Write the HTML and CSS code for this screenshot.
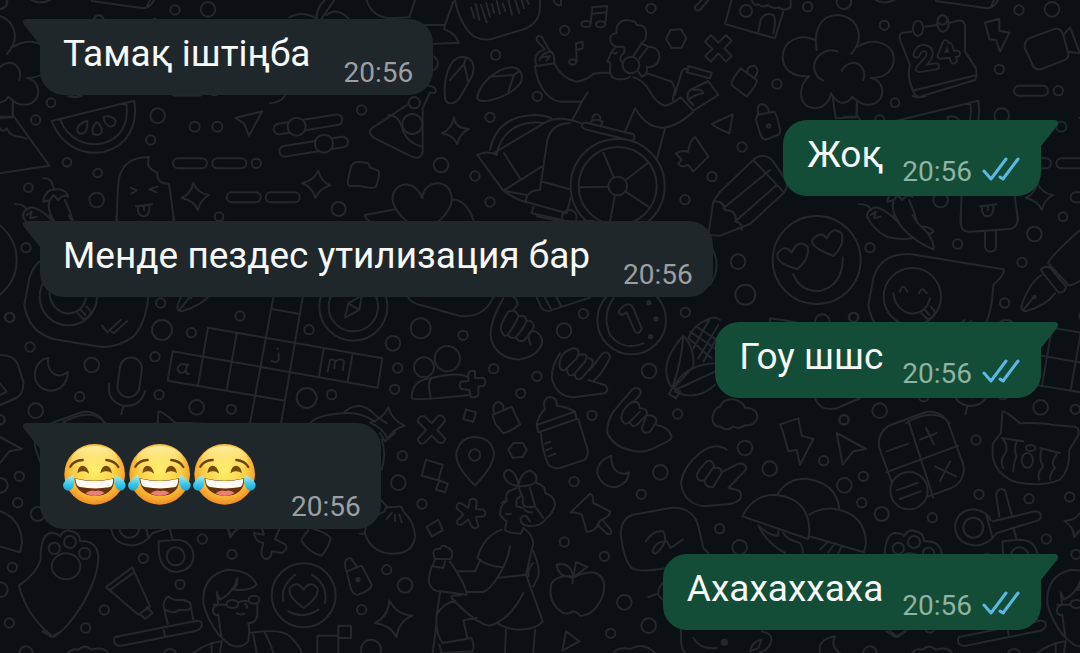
FILE: index.html
```html
<!DOCTYPE html>
<html lang="kk">
<head>
<meta charset="utf-8">
<meta name="viewport" content="width=device-width, initial-scale=1">
<title>Chat</title>
<link rel="stylesheet" href="styles.css">
</head>
<body>
<svg class="wallpaper" viewBox="0 0 3240 1959" preserveAspectRatio="xMinYMin slice" aria-hidden="true">
<g id="doodles">
<g>
<circle cx="525" cy="30" r="14"/><circle cx="624" cy="28" r="22"/><circle cx="295" cy="60" r="14"/><circle cx="153" cy="308" r="13"/><circle cx="107" cy="360" r="14"/><circle cx="473" cy="347" r="22"/><circle cx="584" cy="380" r="15"/><circle cx="652" cy="380" r="15"/><circle cx="452" cy="420" r="14"/><circle cx="201" cy="487" r="13"/><circle cx="293" cy="519" r="13"/><circle cx="290" cy="600" r="22"/><circle cx="85" cy="563" r="13"/><circle cx="769" cy="490" r="14"/><circle cx="1016" cy="627" r="21"/><circle cx="657" cy="650" r="13"/>
<path d="M155 363L403 302C415 380 380 440 310 456C240 468 180 430 155 363ZM180 358C205 420 260 440 310 430C360 415 388 375 379 310M262 362Q232 370 231 392Q240 408 255 396Q264 384 262 362ZM290 366Q272 385 280 402Q296 410 306 396Q306 378 290 366ZM311 350Q310 370 330 380Q346 380 347 362Q336 345 311 350Z"/>
<path d="M706 354L787 334L747 407L732 370Z"/>
<rect x="820" y="357" width="208" height="32" rx="16" transform="rotate(-9 924 373)"/><circle class="solid" cx="890" cy="380" r="27"/>
<rect x="837" y="424" width="208" height="32" rx="16" transform="rotate(-9 941 440)"/><circle class="solid" cx="972" cy="431" r="27"/>
<rect x="519" y="475" width="102" height="30" rx="15"/><rect x="637" y="475" width="102" height="30" rx="15"/><rect x="680" y="577" width="102" height="30" rx="15"/><rect x="797" y="577" width="102" height="30" rx="15"/>
<path d="M580 549Q592 580 627 585Q600 600 594 630Q582 602 545 594Q572 582 580 549ZM955 512Q962 545 991 556Q960 565 946 594Q938 563 907 549Q940 543 955 512Z"/>
<path d="M350 668C352 600 352 560 358 530C370 490 395 472 447 471Q435 505 472 517Q470 552 507 551L522 660M392 563L410 571L394 581M472 560L448 568L470 577M407 619Q430 617 457 613M414 619V632Q418 650 434 649Q450 645 448 615M432 618V630"/>
<path d="M38 315V345L148 497L0 520M0 385Q10 400 20 385Q30 410 60 410L80 416M0 350H35"/>
<path d="M130 535Q155 530 162 570M130 605Q135 565 175 568Q200 570 205 590Q195 585 185 590L175 600L160 585L150 600ZM148 605Q140 630 165 668M195 600Q210 630 220 668M45 612Q75 612 80 630M70 655Q65 630 95 622Q120 625 155 660M80 645L95 635L90 655L110 650"/>
<path d="M0 28Q25 20 20 0M95 0Q120 15 150 0M275 3L430 25Q450 25 462 0M440 22L450 0M868 52Q905 30 950 55Q950 20 975 0M965 55L1003 0M980 45Q1010 20 1045 55M810 310Q840 308 855 288M205 288Q225 295 245 288"/>
</g>
<g transform="translate(1080 0)">
<circle cx="614" cy="91" r="14"/><circle cx="873" cy="25" r="14"/><circle cx="407" cy="165" r="14"/><circle cx="532" cy="289" r="14"/><circle cx="390" cy="352" r="14"/><circle cx="243" cy="495" r="22"/><circle cx="345" cy="528" r="14"/><circle cx="390" cy="606" r="14"/><circle cx="1056" cy="530" r="14"/><circle cx="975" cy="599" r="14"/><circle cx="5" cy="330" r="14"/><circle cx="212" cy="190" r="22"/>
<path d="M285 0Q300 75 340 108Q370 125 400 115L490 88Q540 70 540 20V0M333 22L343 54M347 12L358 60M363 15L380 67M378 8L390 50M396 12L402 38M410 3L420 42M428 10L436 33M445 0L456 45M466 0L478 40M485 0L492 25M500 0L506 12"/>
<path d="M20 0Q35 50 90 55L148 52L165 0M280 5L255 75L190 75M255 75L252 88Q275 95 285 108L297 128L215 132M580 0Q590 20 603 15V0M1025 0L1005 20Q1003 35 1020 30L1045 0"/>
<path d="M692 70L697 22L742 18L736 70M695 42L740 36M650 185L648 130L668 125V145L650 150"/><ellipse cx="678" cy="72" rx="14" ry="9"/><ellipse cx="722" cy="73" rx="14" ry="9"/><ellipse cx="638" cy="186" rx="11" ry="8"/>
<path d="M918 117L932 90L963 88L979 114L965 143L935 144ZM1035 125L1053 105L1075 128L1098 105L1115 122L1093 145L1115 168L1098 185L1075 160L1053 185L1035 168L1057 147Z"/>
<path d="M255 290C250 240 265 175 305 170C345 170 348 210 330 240C310 270 300 310 270 310Q255 308 255 290ZM270 240L312 192L325 245M312 192L318 175M352 290C360 250 410 205 455 202C490 205 495 240 470 262C440 290 390 305 365 303Q350 300 352 290ZM388 230L462 225L445 275M462 225L475 215"/>
<path d="M195 255L220 260Q235 275 220 280L210 277L188 325V455Q185 478 160 472L45 415Q20 400 35 385L145 312M85 345Q115 345 124 378Q138 430 188 440"/><circle cx="163" cy="308" r="17"/><circle cx="157" cy="372" r="30"/>
<path d="M282 352Q285 385 327 387Q298 400 292 433Q280 405 245 400Q275 388 282 352ZM0 485L25 490L30 502L55 512Q62 520 48 560Q45 568 0 558H-30Q-40 555 -36 540L-28 505Q-26 485 0 485Z"/>
<path d="M187 595C190 560 215 548 238 550C275 555 285 600 265 630Q245 660 225 672H150C110 640 90 610 100 580C115 545 165 540 187 595ZM105 628L15 645Q12 655 40 670M275 598Q320 600 340 660"/>
<path d="M555 148L530 122Q528 102 545 110L568 150Q585 160 583 190L530 198Q515 160 555 148M538 180Q550 155 575 155M548 172L570 168L560 182M525 198C530 250 560 300 600 305H665L683 278M583 190Q605 235 650 245Q680 240 700 222Q730 215 750 220"/>
<path d="M768 140Q745 130 752 108Q760 98 770 100Q765 65 800 60Q830 62 830 75Q865 75 857 110Q860 120 845 128M768 140H790Q800 155 785 165Q775 180 790 188M768 140L755 155Q765 165 770 158M755 155L742 185Q755 185 750 205Q748 235 770 237Q800 240 810 230M820 168L845 130L865 140L838 175M865 140Q900 140 898 175Q890 205 860 200Q865 225 845 230L835 215"/><circle cx="813" cy="195" r="25"/>
<path d="M820 232Q850 240 870 275Q890 310 915 317Q930 315 962 292M862 220L935 245L945 265L938 300M945 285L965 215Q975 200 985 210M985 198L1055 218L1050 235L980 217ZM962 292L1000 332L1075 285L1045 243L1000 265Q975 275 985 300L1000 315M985 300Q1000 285 1030 280Q1025 265 1000 270M665 305Q655 330 635 362M825 325L795 395M825 325Q860 385 910 383Q950 380 1000 335M915 385L890 480"/>
<path d="M665 380Q665 367 680 368L820 403Q828 412 818 423L675 388ZM690 370Q700 352 728 365L722 378M697 355Q700 342 712 343Q724 348 720 360"/>
<circle cx="773" cy="558" r="141"/><circle cx="773" cy="558" r="117"/><circle cx="773" cy="558" r="28"/>
<path d="M730 458L760 530M862 490L797 540M658 562L745 560M865 620L797 575M750 665L765 586M390 450Q410 350 520 345Q560 345 575 357M410 465Q420 400 480 375Q520 362 550 370M400 460L560 365Q600 345 665 370M410 465Q380 450 352 465L430 572L545 500M432 460L480 535M430 572Q470 600 500 607M430 572L500 585M630 370Q575 370 562 420L540 568M548 545L630 568M540 570Q500 570 497 605L620 640L633 590M520 620L515 640L610 660"/><circle cx="628" cy="652" r="22"/>
<path d="M948 460Q965 450 985 455Q985 430 1005 410L1025 440L1045 470L1000 515L985 495Q960 505 955 490L965 480ZM530 648Q600 670 700 662M820 690L860 670"/>
</g>
<g transform="translate(2160 0)">
<circle cx="78" cy="33" r="18"/><circle cx="263" cy="20" r="14"/><circle cx="372" cy="5" r="22"/><circle cx="493" cy="76" r="14"/><circle cx="838" cy="208" r="14"/><circle cx="1015" cy="272" r="14"/><circle cx="171" cy="252" r="14"/><circle cx="66" cy="441" r="14"/><circle cx="146" cy="378" r="5"/>
<rect x="882" y="257" width="102" height="30" rx="15"/>
<path d="M290 150C280 95 300 45 352 45C410 47 440 110 393 162M286 120C240 100 190 120 188 170C188 210 220 232 268 228C230 260 235 322 285 325C315 322 330 300 333 280C345 300 360 312 370 308Q388 305 397 290Q430 325 465 310C500 290 490 240 453 234C500 235 525 205 521 170C515 130 460 110 413 140M353 155C320 142 285 165 282 200Q284 232 310 242M365 213C375 190 405 180 422 198Q438 215 430 240M338 290L347 355L410 352L411 300"/>
<path d="M-25 372L38 343L28 400L-5 385ZM0 575L105 475Q135 455 160 485L200 545Q205 560 190 580L90 672L0 707L-35 705L-20 605ZM100 480L190 575M10 625L150 510M45 665L170 555M-20 605Q10 600 15 630Q50 630 48 665Q70 670 65 690"/>
<path d="M35 0L15 72L165 115L190 35M115 95L122 60Q135 35 160 45Q170 60 160 100M95 0Q100 20 115 12Q125 25 145 15Q160 30 175 22Q195 35 212 22V0"/>
<path d="M62 205L110 240Q115 250 80 290L35 255Q30 245 62 205ZM80 215Q85 195 105 198Q120 210 105 232M112 345L160 335Q170 335 180 390Q182 405 165 408L140 418Q125 420 120 400L108 360ZM115 345Q108 315 125 312Q145 315 147 338"/>
<path d="M575 95L548 98Q535 103 540 120L570 195Q560 230 578 270Q585 292 600 290L765 240Q772 230 768 205L735 155V75Q730 60 715 62L690 68M615 80L650 75M578 272L768 226"/><ellipse cx="594" cy="85" rx="15" ry="23"/><ellipse cx="669" cy="70" rx="17" ry="25"/>
<g id="date"><path class="digit-edge" d="M590 163Q596 144 613 144Q638 150 624 176L597 207L648 199M677 130L662 167L711 161M688 138L701 181"/><path class="digit-core" d="M590 163Q596 144 613 144Q638 150 624 176L597 207L648 199M677 130L662 167L711 161M688 138L701 181"/></g>
<path d="M795 68L838 56V92L868 98L840 155L828 120L808 118ZM915 145Q910 120 935 112L1000 88Q1020 82 1028 100L1045 160Q1048 175 1030 182L965 207Q945 212 938 195ZM1030 105L1050 82L1080 160L1045 155"/>
</g>
<g transform="translate(0 645)">
<circle cx="78" cy="98" r="14"/><circle cx="28" cy="307" r="14"/><circle cx="90" cy="396" r="14"/><circle cx="482" cy="264" r="14"/><circle cx="486" cy="345" r="30"/><circle cx="574" cy="353" r="14"/><circle cx="720" cy="303" r="14"/><circle cx="927" cy="344" r="14"/><circle cx="275" cy="450" r="22"/><circle cx="465" cy="425" r="14"/><circle cx="239" cy="545" r="14"/><circle cx="107" cy="587" r="22"/><circle cx="477" cy="539" r="14"/><circle cx="590" cy="577" r="22"/><circle cx="694" cy="583" r="14"/><circle cx="920" cy="549" r="30"/><circle cx="995" cy="539" r="14"/><circle cx="0" cy="615" r="14"/>
<path d="M445 248Q435 330 400 365Q350 400 300 395L160 372Q85 350 73 270L88 190Q108 115 198 117L478 163Q486 175 448 210ZM148 235C153 280 188 300 213 295Q248 290 258 250M168 230Q176 200 190 230M225 235Q233 210 248 235M233 295L250 312Q268 310 273 290L260 275M243 285L256 300M306 332L322 352L362 315M335 350L341 355L382 318"/><circle cx="205" cy="245" r="86"/>
<path d="M145 428C110 435 100 470 107 495C120 530 160 535 185 515Q205 495 203 470Q180 490 160 475Q140 460 145 428ZM0 420Q40 420 52 445L70 500Q72 540 45 550L0 570M0 505L20 530L0 540M327 507Q322 560 370 572Q420 578 436 527M370 574L364 598"/>
<rect x="356" y="427" width="66" height="120" rx="33" transform="rotate(8 389 487)"/>
<path d="M624 338L1147 430L1133 518L518 409L503 497L855 557M624 338L594 512M710 355L680 525M820 248L750 625M908 248L843 625M818 283L900 297M971 400L957 485M1058 415L1043 500M560 450Q540 440 533 460Q535 480 555 470L563 448M560 470Q558 478 567 477M836 415V435Q832 445 815 438M833 400V402M983 470L990 435Q1003 430 1005 440L1003 460M1005 440Q1025 425 1033 440L1028 465"/>
<circle cx="1060" cy="275" r="102"/><circle cx="1060" cy="275" r="74"/><path d="M1035 308L1045 265L1085 242L1078 285ZM1045 265L1078 285"/>
<path d="M185 625Q240 590 285 602Q305 610 318 625M930 625Q950 600 1030 595Q1045 575 1080 572Q1110 580 1125 600L1160 625M1030 595Q1080 590 1125 620"/>
</g>
<g transform="translate(1080 645)">
<circle cx="182" cy="340" r="30"/><circle cx="99" cy="385" r="22"/><circle cx="309" cy="361" r="14"/><circle cx="612" cy="347" r="22"/><circle cx="670" cy="296" r="14"/><circle cx="976" cy="292" r="14"/><circle cx="401" cy="461" r="14"/><circle cx="113" cy="459" r="14"/><circle cx="104" cy="523" r="14"/><circle cx="531" cy="484" r="14"/><circle cx="482" cy="535" r="14"/><circle cx="867" cy="468" r="22"/><circle cx="696" cy="601" r="14"/><circle cx="953" cy="597" r="14"/>
<path d="M145 248Q155 265 190 272L300 303Q370 310 400 248M530 248L545 280Q555 290 570 287L690 248M555 248L572 280M590 248L605 275M1050 90Q1090 150 1050 210"/>
<circle cx="815" cy="315" r="103"/><path d="M850 385Q790 410 750 360Q725 300 760 250M775 292Q780 280 795 270Q812 262 820 280L845 340Q840 360 825 350L800 292L785 300Z"/><circle class="dot" cx="867" cy="263" r="5"/><circle class="dot" cx="888" cy="312" r="5"/><circle class="dot" cx="872" cy="365" r="5"/>
<path d="M430 250Q390 320 392 360C395 410 440 435 480 433C530 425 555 390 543 365Q525 340 510 352Q500 360 512 390M450 240Q475 250 472 270L460 285M425 350Q415 335 445 290Q470 280 475 305Q460 340 440 362Q430 365 425 350M475 305Q495 295 500 318Q485 350 465 368Q450 372 445 360M500 318Q520 315 522 335Q510 360 490 378Q475 380 468 368"/>
<path d="M600 415Q575 450 575 490Q590 545 640 547L735 535Q750 520 735 510L685 495M700 497Q720 485 750 430Q748 405 728 415L690 465M598 450Q600 410 640 400Q665 400 650 430L615 465Q600 470 598 450M655 420Q690 410 675 440L640 480Q620 485 622 465M685 430Q705 430 695 455L665 490Q645 498 645 480"/>
<path d="M742 654Q740 620 760 590L815 525Q835 510 843 530Q840 550 810 565Q780 590 785 615Q795 635 810 620L840 590M820 562Q838 555 840 580Q865 580 860 600Q890 600 890 620L870 650Q850 660 845 640L860 600M810 620Q815 640 830 630L860 600M890 630Q925 635 935 665Q935 675 900 690Q850 720 810 705Q760 695 742 654"/>
<circle cx="192" cy="457" r="30"/><circle cx="262" cy="431" r="38"/><path d="M155 550Q155 495 210 490Q290 470 320 485M155 550Q165 558 330 540M212 545Q200 500 215 490M325 475Q330 465 345 468V490L370 488Q382 500 372 512L355 515V540Q345 552 332 545L328 525L305 522Q295 512 302 500L325 498Z"/>
<path d="M970 362Q910 430 920 480Q925 510 940 520L1000 455Q1005 400 970 362ZM970 362Q965 440 938 515M940 520Q970 450 1065 445M945 530Q1010 560 1065 510M945 525L1065 470M938 517L960 530L948 550L927 537ZM985 370Q1000 330 1040 315Q1060 300 1080 315M990 350L1065 400M1010 335L1070 375M1000 400L1050 310M1015 430L1075 330M1030 440L1070 370M985 370L1055 430"/>
<path d="M85 577Q95 615 134 632Q100 640 83 672Q70 640 30 623Q70 612 85 577ZM172 618Q180 598 195 605L215 625L235 602Q255 600 255 618L232 645L256 672Q250 688 235 682L215 662L192 685Q178 690 173 672L198 645ZM318 583L348 592L340 620L310 612ZM398 600L455 575L480 628Q450 650 430 655L405 625ZM402 595Q395 565 415 560Q432 565 430 582"/>
<path d="M530 630L645 590M530 630Q535 600 555 583Q545 550 570 546Q592 548 590 572Q620 575 645 590L650 612L535 652L530 630M543 652Q545 704 565 749Q580 762 600 759L675 734Q685 724 683 704L655 612M555 686L572 680M558 706L575 699M565 724L587 716"/>
</g>
<g transform="translate(2160 645)">
<circle cx="54" cy="140" r="22"/><circle cx="76" cy="239" r="30"/><circle cx="713" cy="87" r="14"/><circle cx="943" cy="57" r="22"/><circle cx="906" cy="142" r="14"/><circle cx="402" cy="307" r="14"/><circle cx="307" cy="320" r="22"/><circle cx="372" cy="614" r="14"/><circle cx="290" cy="135" r="132"/>
<path d="M232 162Q165 145 173 115Q195 85 215 113Q235 70 263 95Q270 130 232 162ZM340 123Q270 95 277 75Q300 45 320 70Q340 30 365 55Q375 90 340 123ZM220 178Q240 230 300 228Q370 210 368 127"/>
<path d="M722 0V25Q725 52 750 50L870 42Q895 38 893 5M795 50V95Q797 110 812 110Q828 108 828 95V47M440 0Q455 40 500 65Q540 76 575 70M520 0Q560 70 640 103Q645 85 620 50Q585 20 578 0M605 35Q635 35 640 50Q630 62 620 50"/>
<path d="M1100 185Q1055 215 1045 210L985 145Q985 130 1080 45M962 165Q975 150 990 158L1038 215Q1035 235 1015 232ZM965 180Q930 200 905 270Q900 290 920 288Q980 270 1005 235M910 285L940 248"/><circle cx="943" cy="246" r="4"/>
<path d="M0 575Q10 550 40 553Q70 560 75 578Q115 580 112 610Q100 635 75 630Q60 645 40 635Q20 650 0 635Q-25 635 -22 605Q-15 575 0 575ZM285 550Q300 590 350 580L420 550M150 320V310L230 322M843 654L847 590Q855 585 900 625Q960 622 1000 630L1065 635Q1080 640 1075 660L1048 704Q1050 764 1020 794Q960 819 880 799Q805 764 820 684L843 654"/>
</g>
<g transform="translate(0 1299)">
<circle cx="58" cy="130" r="14"/><circle cx="1" cy="157" r="22"/><circle cx="53" cy="209" r="14"/><circle cx="113" cy="243" r="21"/><circle cx="37" cy="403" r="14"/><circle cx="1" cy="470" r="22"/><circle cx="28" cy="570" r="14"/><circle cx="257" cy="585" r="14"/><circle cx="313" cy="531" r="14"/><circle cx="540" cy="454" r="14"/><circle cx="430" cy="376" r="14"/><circle cx="607" cy="318" r="14"/><circle cx="696" cy="364" r="14"/><circle cx="78" cy="660" r="20"/><circle cx="510" cy="668" r="20"/><circle class="dot" cx="1074" cy="440" r="5"/>
<path d="M57 458Q110 420 122 380Q120 310 150 300Q175 300 180 310Q195 285 215 295Q240 300 240 325Q290 320 295 370Q295 430 250 510Q200 590 160 612Q80 550 57 458Z"/><circle cx="163" cy="346" r="17"/><circle cx="210" cy="327" r="18"/><circle cx="254" cy="361" r="17"/><ellipse cx="198" cy="400" rx="43" ry="39"/>
<path d="M318 462L397 403L450 520L415 545ZM328 472L402 418M440 522L458 540L435 558L420 543M345 612L590 563Q608 562 605 580Q600 590 590 593L365 638Q345 640 342 625Q342 615 345 612M490 583L495 610M503 572L490 515Q495 495 505 490Q520 505 545 500Q575 505 572 520L580 560M495 530Q520 545 540 530Q560 535 575 525"/>
<path d="M476 325V350Q480 415 530 417Q585 410 580 360Q570 320 528 320L476 325M446 315L428 250M446 265L573 235Q593 235 590 255L583 262L458 300M466 250L456 185Q463 160 483 172L503 245M510 290L518 320M685 290L690 312L710 290"/><circle cx="527" cy="370" r="27"/><circle cx="388" cy="284" r="30"/><path d="M458 300Q430 340 388 337Q335 330 333 280Q340 230 390 229Q430 235 440 262"/>
<path d="M762 300Q765 325 790 330L785 350Q780 370 797 378Q815 378 815 355L845 360Q865 350 857 335L825 318L840 285M785 285L792 305L762 300M925 292Q900 320 905 325Q930 360 965 368Q985 345 992 318Q985 300 940 288"/>
<path d="M660 610Q620 560 610 510Q605 430 680 410Q750 410 770 455Q750 475 700 470Q715 455 712 435Q700 480 660 500L650 478L655 515Q635 520 640 540Q650 550 655 545Q660 590 665 615L690 635Q720 650 745 625Q750 590 745 570Q770 570 772 545V510M715 508Q730 500 745 505M640 515H680M710 540Q720 548 733 542M735 512Q745 520 740 525M750 600Q840 585 870 610Q900 640 905 660M795 600Q815 640 820 660M760 605L770 660M665 625L660 660M635 630V660M580 660Q620 630 665 625"/><ellipse cx="697" cy="513" rx="18" ry="12"/><ellipse cx="762" cy="500" rx="16" ry="12"/>
<circle cx="911" cy="487" r="96"/><path d="M911 525Q860 490 870 465Q890 440 911 470Q930 440 952 465Q960 490 911 525ZM865 535Q910 560 955 530M850 505Q840 460 885 425M935 425Q985 455 975 510M1015 578H1053V615H1015ZM952 660V608H1015M1015 615V660M1040 415L1085 398L1115 455Q1115 470 1075 485Q1060 488 1052 465ZM1038 410Q1028 375 1052 375L1070 400M205 660Q215 645 235 650Q255 632 275 650Q310 640 325 660"/>
</g>
<g transform="translate(1080 1299)">
<circle cx="127" cy="68" r="14"/><circle cx="115" cy="149" r="22"/><circle cx="186" cy="213" r="14"/><circle cx="80" cy="410" r="14"/><circle cx="135" cy="457" r="22"/><circle cx="5" cy="530" r="14"/><circle cx="33" cy="650" r="30"/><circle cx="642" cy="146" r="14"/><circle cx="901" cy="118" r="22"/><circle cx="844" cy="184" r="14"/><circle cx="613" cy="327" r="14"/><circle cx="733" cy="370" r="14"/><circle cx="793" cy="508" r="22"/><circle cx="866" cy="578" r="22"/><circle cx="752" cy="601" r="14"/><circle cx="1079" cy="287" r="14"/><circle cx="344" cy="66" r="17"/>
<path d="M345 157Q285 100 289 60Q300 12 345 12Q395 15 402 60Q402 100 345 157ZM445 50L460 30L488 30L500 50L488 72L458 74ZM198 80L248 95L235 142L185 128ZM238 142L263 152L255 178L228 170ZM200 282L235 260L248 292L215 310ZM325 225L330 200Q345 192 350 205L348 228L370 230Q382 240 372 250L348 252L355 280Q345 292 335 280L325 260L305 275Q288 278 292 262L310 245L290 225Q290 205 305 212Z"/>
<path d="M75 235Q15 260 15 300Q30 355 90 362Q160 365 165 310Q165 270 130 235Q125 215 110 222L90 222Q70 225 75 235M95 240L80 258M105 245V265M118 245L125 268M62 200L82 222M0 302H15M60 0L75 25L105 0M65 20Q80 60 65 110"/>
<path d="M475 160Q430 150 432 120Q445 100 465 125Q475 140 475 160Q480 120 510 112Q535 125 528 145Q520 160 475 160L490 200Q480 225 520 222M470 165L445 175Q435 190 440 200L425 210M440 205Q420 215 420 245Q430 260 440 265L435 290Q440 300 483 302L490 285M480 190Q465 200 470 220L490 225Q500 240 515 238M510 165L525 220L550 255M530 150Q560 160 555 180Q585 190 585 215Q580 240 560 255Q540 285 500 278Q480 275 482 255Q490 245 500 250L510 265M438 242Q445 246 453 242"/>
<path d="M425 290Q370 310 352 375Q380 400 425 402M362 380L345 415H295M450 340Q445 380 415 430Q390 470 370 477H320M490 285Q515 300 520 330L498 425L410 435M520 355Q540 400 535 430L520 460M520 390Q505 400 505 430M498 425L548 565Q530 590 470 590Q430 585 412 570M490 480Q450 560 390 578Q350 575 275 495Q270 485 300 487M220 360Q220 345 240 348Q245 330 265 345Q285 355 272 378L225 378ZM225 378L218 400L250 405L255 385M215 400Q205 430 207 450Q215 475 240 475L320 485Q320 460 270 385M240 480L230 545Q225 600 248 630L335 615Q345 640 338 655L245 660L238 635M230 545Q250 510 285 503M350 555L310 562L322 615M438 590L435 660M525 590L520 660M230 570L218 660"/>
<path d="M632 238L690 182Q700 185 700 210L750 235Q752 250 720 262L712 280Q700 295 680 297Q675 275 665 245Q650 238 632 238ZM712 275L742 303Q758 305 752 290L728 262M755 68Q710 85 712 120Q725 165 770 162Q805 150 807 118Q785 130 765 110Q750 90 755 68Z"/>
<path d="M1045 360L1030 345L1015 280Q1000 220 930 225L820 245Q785 255 782 300Q790 380 815 405Q840 420 920 405M857 325Q880 290 910 295Q925 320 900 350Q885 370 877 355Q885 325 920 325L932 345L968 320M640 435Q600 420 575 450Q560 510 610 540Q630 545 635 535Q650 535 660 548Q700 550 728 490Q745 430 700 418Q660 420 640 435M638 450Q640 425 625 430Q595 430 590 395Q630 385 640 430L648 387L682 402L640 432"/>
<path d="M618 595L658 625L607 653ZM865 492L893 482Q900 450 918 445M893 482Q900 500 918 502M88 502Q110 545 157 548Q115 565 110 613Q90 575 45 570Q85 550 88 502ZM760 660Q775 640 810 648Q850 625 885 660M963 590V625Q965 650 975 660M1000 615Q1020 650 1070 645"/>
<path d="M1100 50Q1065 25 1020 60Q970 100 963 150Q970 210 1030 220L1080 215Q1130 215 1142 195Q1148 175 1130 170L1105 165L1158 110Q1160 90 1135 92L1090 115M1010 130Q1010 115 1040 85Q1060 80 1062 100L1035 140Q1015 150 1010 130M1062 105Q1085 100 1085 120L1060 162Q1035 165 1033 142"/>
</g>
<g transform="translate(2160 1299)">
<circle cx="75" cy="45" r="22"/><circle cx="149" cy="107" r="22"/><circle cx="311" cy="83" r="14"/><circle cx="637" cy="254" r="14"/><circle cx="768" cy="21" r="14"/><circle cx="777" cy="184" r="14"/><circle cx="927" cy="197" r="14"/><circle cx="1049" cy="192" r="14"/><circle cx="59" cy="343" r="22"/><circle class="dot" cx="13" cy="628" r="8"/>
<path d="M190 0L205 55L230 50L240 95L280 18L245 8L235 -44L180 -26ZM350 0L438 48L400 55L368 95Z"/>
<path d="M172 185Q200 135 260 137Q350 150 358 228M67 250Q100 185 165 185Q265 195 268 290L265 318ZM268 245Q300 225 340 227Q435 240 438 330L432 358L268 310M115 278Q140 330 195 360M115 278Q150 310 175 308V295M190 300Q200 320 240 330Q250 345 248 360M325 325L300 350M345 330L325 358M365 340L355 360"/>
<rect x="494" y="-50" width="220" height="240" rx="60" transform="rotate(-20 604 70)"/><path d="M565 -38L640 195M498 118L715 38"/><circle class="solid" cx="567" cy="173" r="56"/><path d="M500 55L565 32M600 20L650 0M618 -15L642 35M645 100L708 130M690 85L660 145M530 172L592 150M540 198L602 175"/>
<path d="M845 15L910 25M850 20Q870 45 850 70Q840 85 850 105M890 25Q880 50 890 70Q880 90 880 115M960 45L1020 60M965 50Q955 80 970 100Q950 120 958 140M1010 65Q990 90 1005 105Q990 120 990 140"/><ellipse cx="932" cy="45" rx="14" ry="9"/><ellipse cx="922" cy="82" rx="17" ry="22"/>
<path d="M1080 240Q1065 262 1033 264Q1060 280 1065 312Q1075 285 1110 280M500 595L525 612L555 595M90 655Q95 625 125 620L115 645ZM125 595Q155 600 155 620Q150 650 120 658M300 660Q290 620 345 610Q330 640 360 660"/>
</g>
</g>
<use href="#doodles" x="2532"/>
<use href="#doodles" x="-2532"/>
</svg>

<svg class="sprite" aria-hidden="true">
<defs>
<radialGradient id="skin" cx="0.5" cy="0.42" r="0.6"><stop offset="0" stop-color="#fff06a"/><stop offset="0.55" stop-color="#fbd24a"/><stop offset="0.82" stop-color="#f7a82f"/><stop offset="1" stop-color="#ec8420"/></radialGradient>
<linearGradient id="shine" x1="0" y1="0" x2="0" y2="1"><stop offset="0" stop-color="#fff3b0" stop-opacity="0.85"/><stop offset="1" stop-color="#ffe76a" stop-opacity="0"/></linearGradient>
<linearGradient id="drop" x1="0" y1="0" x2="0" y2="1"><stop offset="0" stop-color="#b4eef0"/><stop offset="0.55" stop-color="#3fcbe6"/><stop offset="1" stop-color="#19a5d6"/></linearGradient>
</defs>
<symbol id="joy" viewBox="0 0 195 186">
<circle cx="95" cy="94" r="91" fill="url(#skin)"/>
<ellipse cx="95" cy="51" rx="70" ry="42" fill="url(#shine)"/>
<g fill="none" stroke="#6b4210" stroke-width="7" stroke-linecap="round"><path d="M22 71Q33 52 59 51M130 51Q155 53 166 72"/></g>
<path d="M43 91Q45 68 59 68Q74 70 78 92Q69 84 60 85Q51 84 43 91ZM112 91Q115 69 130 68Q144 70 147 91Q138 84 129 85Q121 84 112 91Z" fill="#75480f"/>
<path d="M34 106Q95 120 154 106Q154 158 96 159Q39 157 34 106Z" fill="#65320c"/>
<path d="M37 107Q95 121 151 107Q151 132 138 133Q94 140 51 132Q39 130 37 107Z" fill="#fffaf1"/>
<path d="M67 151Q83 139 97 144Q112 139 125 150Q98 167 67 151Z" fill="#ed7e77"/>
<path d="M29 96Q34 100 34 119Q31 141 15 143Q0 140 0 126Q3 112 29 96ZM157 96Q187 112 188 126Q187 142 172 143Q157 139 154 119Q153 101 157 96Z" fill="url(#drop)"/>
</symbol>
<symbol id="read" viewBox="0 0 38 24"><path d="M2 14L9 22L24 2M18 20L21 22L36 2" fill="none" stroke="#5bb8e2" stroke-width="3" stroke-linecap="round" stroke-linejoin="round"/></symbol>
<symbol id="tail" viewBox="0 0 34 26"><path d="M3 0H34V26H17L1 6Q-2 1 3 0Z" fill="currentColor"/></symbol>
</svg>

<main class="chat">
<article class="bubble incoming"><svg class="tail"><use href="#tail"/></svg><p class="text">Тамақ іштіңба</p><div class="meta"><time>20:56</time></div></article>
<article class="bubble outgoing"><svg class="tail"><use href="#tail"/></svg><p class="text">Жоқ</p><div class="meta"><time>20:56</time><svg class="ticks" role="img" aria-label="Read"><use href="#read"/></svg></div></article>
<article class="bubble incoming"><svg class="tail"><use href="#tail"/></svg><p class="text">Менде пездес утилизация бар</p><div class="meta"><time>20:56</time></div></article>
<article class="bubble outgoing"><svg class="tail"><use href="#tail"/></svg><p class="text">Гоу шшс</p><div class="meta"><time>20:56</time><svg class="ticks" role="img" aria-label="Read"><use href="#read"/></svg></div></article>
<article class="bubble incoming"><svg class="tail"><use href="#tail"/></svg><div class="emojis" role="img" aria-label="Three faces with tears of joy"><svg><use href="#joy"/></svg><svg><use href="#joy"/></svg><svg><use href="#joy"/></svg></div><div class="meta"><time>20:56</time></div></article>
<article class="bubble outgoing"><svg class="tail"><use href="#tail"/></svg><p class="text">Ахахаххаха</p><div class="meta"><time>20:56</time><svg class="ticks" role="img" aria-label="Read"><use href="#read"/></svg></div></article>
</main>
</body>
</html>
```
FILE: styles.css
```css
* {
  box-sizing: border-box;
}

body {
  position: relative;
  margin: 0;
  min-height: 100vh;
  overflow-x: hidden;
  background: #0b1014;
  font-family: Roboto, "Noto Sans", sans-serif;
}

.wallpaper {
  position: absolute;
  inset: 0;
  width: 100%;
  height: 100%;
  fill: none;
  stroke: #22282c;
  stroke-width: 6;
  stroke-linecap: round;
  stroke-linejoin: round;
}

.wallpaper .solid {
  fill: #0b1014;
}

.wallpaper .dot {
  fill: #22282c;
}

.wallpaper .digit-edge {
  stroke-width: 24;
}

.wallpaper .digit-core {
  stroke: #0b1014;
  stroke-width: 13;
}

.sprite {
  position: absolute;
  width: 0;
  height: 0;
}

.chat {
  position: relative;
  display: flex;
  flex-direction: column;
  gap: 25px;
  padding: 19px 39px 23px 40px;
}

.bubble {
  position: relative;
  display: flex;
  align-items: flex-end;
  max-width: 85%;
  border-radius: 24px;
}

.incoming {
  align-self: flex-start;
  gap: 33px;
  padding: 13px 20px 6px 23px;
  background: #20272b;
  color: #20272b;
  border-top-left-radius: 0;
}

.outgoing {
  align-self: flex-end;
  gap: 19px;
  padding: 13px 21px 8px 24px;
  background: #144d37;
  color: #144d37;
  border-top-right-radius: 0;
}

.tail {
  position: absolute;
  top: 0;
  left: -17px;
  width: 34px;
  height: 26px;
}

.outgoing .tail {
  right: -17px;
  left: auto;
  transform: scaleX(-1);
}

.text {
  margin: 0;
  color: #f7f9fa;
  font-size: 37px;
  line-height: 44px;
}

.incoming .text {
  padding-bottom: 13px;
}

.outgoing .text {
  padding-bottom: 11px;
}

.meta {
  display: flex;
  align-items: center;
  gap: 10px;
  color: #9b9fa2;
  font-size: 28px;
  line-height: 32px;
}

.outgoing .meta {
  color: #8fb3a3;
}

.ticks {
  width: 38px;
  height: 24px;
  margin-bottom: 6px;
}

.emojis {
  display: flex;
  padding: 7px 0 18px;
}

.emojis svg {
  width: 65px;
  height: 62px;
}
```
